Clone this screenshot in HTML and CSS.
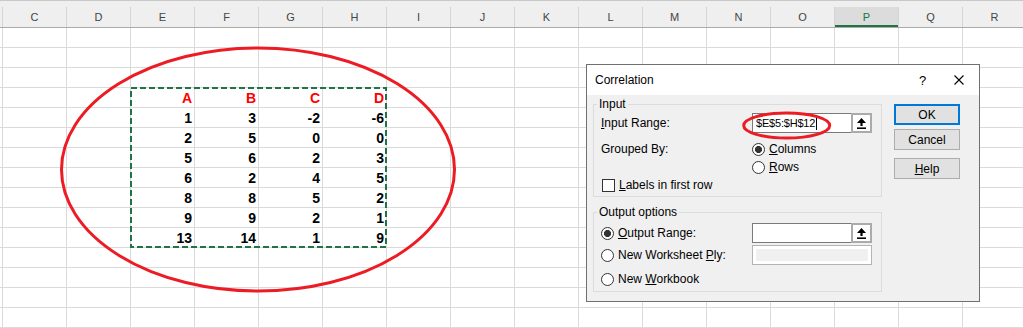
FILE: index.html
```html
<!DOCTYPE html>
<html lang="en">
<head>
  <meta charset="UTF-8">
  <title>Correlation</title>
  <link rel="stylesheet" href="styles.css">
</head>
<body>
  <!-- Column headers -->
  <div class="colheads">
    <div class="colhead stub"></div>
    <div class="colhead">C</div>
    <div class="colhead">D</div>
    <div class="colhead">E</div>
    <div class="colhead">F</div>
    <div class="colhead">G</div>
    <div class="colhead">H</div>
    <div class="colhead">I</div>
    <div class="colhead">J</div>
    <div class="colhead">K</div>
    <div class="colhead">L</div>
    <div class="colhead">M</div>
    <div class="colhead">N</div>
    <div class="colhead">O</div>
    <div class="colhead selected">P</div>
    <div class="colhead">Q</div>
    <div class="colhead">R</div>
  </div>

  <!-- Cells -->
  <div class="grid">
    <div class="range">
      <div class="cell hdr">A</div><div class="cell hdr">B</div><div class="cell hdr">C</div><div class="cell hdr">D</div>
      <div class="cell">1</div><div class="cell">3</div><div class="cell">-2</div><div class="cell">-6</div>
      <div class="cell">2</div><div class="cell">5</div><div class="cell">0</div><div class="cell">0</div>
      <div class="cell">5</div><div class="cell">6</div><div class="cell">2</div><div class="cell">3</div>
      <div class="cell">6</div><div class="cell">2</div><div class="cell">4</div><div class="cell">5</div>
      <div class="cell">8</div><div class="cell">8</div><div class="cell">5</div><div class="cell">2</div>
      <div class="cell">9</div><div class="cell">9</div><div class="cell">2</div><div class="cell">1</div>
      <div class="cell">13</div><div class="cell">14</div><div class="cell">1</div><div class="cell">9</div>
      <svg class="ants" viewBox="0 0 257 161">
        <rect x="1" y="1" width="255" height="159" fill="none" stroke="#217346" stroke-width="2" stroke-dasharray="6 3"/>
      </svg>
    </div>
  </div>

  <!-- Correlation dialog -->
  <div class="dialog">
    <div class="dlg-title">
      <span class="dlg-name">Correlation</span>
      <span class="dlg-help">?</span>
      <svg class="dlg-close" viewBox="0 0 10 10"><path d="M0.5 0.5L9.5 9.5M9.5 0.5L0.5 9.5" stroke="#000" stroke-width="1.1"/></svg>
    </div>
    <div class="dlg-body">
      <div class="dlg-main">
        <fieldset class="group group-input">
          <legend>Input</legend>
          <div class="row row-range">
            <span class="lbl"><u>I</u>nput Range:</span>
            <div class="refedit">
              <span class="ref-text">$E$5:$H$12<i class="caret"></i></span>
              <span class="ref-btn"><svg viewBox="0 0 9 11"><polygon points="4.5,0 9,5 5.6,5 5.6,8 3.4,8 3.4,5 0,5" fill="#000"/><rect x="0" y="9.4" width="9" height="1.6" fill="#000"/></svg></span>
            </div>
          </div>
          <div class="row row-opt row-grouped">
            <span class="lbl">Grouped By:</span>
            <span class="radio on"></span><span><u>C</u>olumns</span>
          </div>
          <div class="row row-opt">
            <span class="lbl"></span>
            <span class="radio"></span><span><u>R</u>ows</span>
          </div>
          <div class="row row-check">
            <span class="check"></span><span><u>L</u>abels in first row</span>
          </div>
        </fieldset>

        <fieldset class="group group-output">
          <legend>Output options</legend>
          <div class="row row-out">
            <span class="lbl lbl-radio"><span class="radio on"></span><span><u>O</u>utput Range:</span></span>
            <div class="refedit">
              <span class="ref-text"></span>
              <span class="ref-btn"><svg viewBox="0 0 9 11"><polygon points="4.5,0 9,5 5.6,5 5.6,8 3.4,8 3.4,5 0,5" fill="#000"/><rect x="0" y="9.4" width="9" height="1.6" fill="#000"/></svg></span>
            </div>
          </div>
          <div class="row row-out row-ply">
            <span class="lbl lbl-radio"><span class="radio"></span><span>New Worksheet <u>P</u>ly:</span></span>
            <div class="ref-off"></div>
          </div>
          <div class="row row-out row-book">
            <span class="lbl lbl-radio"><span class="radio"></span><span>New <u>W</u>orkbook</span></span>
          </div>
        </fieldset>
      </div>

      <div class="dlg-buttons">
        <button class="btn btn-default">OK</button>
        <button class="btn btn-cancel">Cancel</button>
        <button class="btn btn-help"><u>H</u>elp</button>
      </div>
    </div>
  </div>

  <!-- Hand-drawn red marks -->
  <svg class="marks" viewBox="0 0 1023 328">
    <ellipse cx="258" cy="169.5" rx="196.5" ry="121.5" fill="none" stroke="#ed1c24" stroke-width="3"/>
    <ellipse cx="786.7" cy="125.5" rx="43" ry="12.5" fill="none" stroke="#ed1c24" stroke-width="3"/>
  </svg>
</body>
</html>
```

FILE: styles.css
```css
/* Base */
* { margin: 0; padding: 0; box-sizing: border-box; }
body {
  width: 1023px; height: 328px; overflow: hidden; position: relative;
  background: #fff; font-family: "Liberation Sans", Arial, sans-serif; color: #000;
}

/* Column headers */
.colheads {
  display: flex; height: 28px; padding-top: 6px;
  background: #efefef; border-top: 1px solid #c8c8c8; border-bottom: 1px solid #ababab;
}
.colhead {
  flex: none; width: 64px; height: 20px; line-height: 20px;
  border-right: 1px solid #d4d4d4; text-align: center; font-size: 11px; color: #444;
}
.colhead.stub { width: 3px; }
.colhead.selected { background: #dcdcdc; color: #217346; box-shadow: inset 0 -2px 0 #217346; }

/* Cell grid */
.grid {
  display: grid; grid-template-columns: 3px repeat(16, 64px); grid-template-rows: repeat(15, 20px);
  background-image:
    linear-gradient(to right, transparent 63px, #dadada 63px),
    linear-gradient(to bottom, transparent 19px, #dadada 19px);
  background-size: 64px 100%, 100% 20px;
  background-position: 3px 0, 0 0;
}
.range {
  grid-column: 4 / span 4; grid-row: 4 / span 8; position: relative;
  display: grid; grid-template-columns: repeat(4, 64px); grid-auto-rows: 20px;
}
.cell {
  font-size: 14px; font-weight: bold; line-height: 21px;
  text-align: right; padding-right: 3px;
}
.cell.hdr { color: #f00; }
.ants { position: absolute; left: -1px; top: -1px; width: 257px; height: 161px; }

/* Dialog */
.dialog {
  position: absolute; left: 586px; top: 64px; width: 394px; height: 238px;
  border: 1px solid #707070; background: #f0f0f0; font-size: 12px;
}
.dlg-title { display: flex; align-items: center; height: 30px; background: #fff; padding-left: 8px; }
.dlg-name { flex: 1; }
.dlg-help { width: 7px; text-align: center; font-size: 13px; margin-right: 28px; }
.dlg-close { width: 10px; height: 10px; margin-right: 15px; }

.dlg-body { display: flex; padding-left: 6px; }
.dlg-main { width: 289px; }

.group { border: 1px solid #dcdcdc; padding: 0 0 0 7px; min-width: 0; }
.group legend { margin-left: -4px; padding: 0 2px; line-height: 14px; }
.group-input { margin-top: 2px; padding-top: 2px; padding-bottom: 2px; }
.group-output { margin-top: 8px; padding-top: 4px; padding-bottom: 2px; }

.row { display: flex; align-items: center; }
.lbl { flex: none; width: 151px; }
.lbl-radio { display: flex; align-items: center; gap: 4px; }
.row-range { height: 20px; }
.row-opt { height: 18px; gap: 4px; }
.row-opt .lbl { margin-right: -4px; }
.row-grouped { margin-top: 7px; }
.row-check { height: 18px; gap: 4px; }
.row-out { height: 20px; }
.row-ply { margin-top: 2px; }
.row-book { margin-top: 4px; }

.radio {
  flex: none; width: 13px; height: 13px; border: 1px solid #333; border-radius: 50%; background: #fff;
}
.radio.on { background: radial-gradient(circle, #333 0 3.3px, #fff 3.8px); }
.check { flex: none; width: 13px; height: 13px; border: 1px solid #333; background: #fff; margin-left: 1px; }

/* Range pickers */
.refedit { display: flex; width: 120px; height: 20px; }
.ref-text {
  flex: 1; display: flex; align-items: center; padding-left: 3px;
  font-size: 11px; letter-spacing: -0.2px;
  background: #fff; border: 1px solid #7a7a7a; border-right: 0;
}
.caret { display: inline-block; width: 1px; height: 13px; background: #000; margin-left: 1px; }
.ref-btn {
  flex: none; width: 21px; display: flex; align-items: center; justify-content: center;
  background: #fff; border: 2px solid #ababab;
}
.ref-btn svg { width: 9px; height: 11px; }
.ref-off {
  width: 120px; height: 20px; border: 1px solid #b4b4b4;
  background: #f0f0f0; box-shadow: inset 0 0 0 3px #fff;
}

/* Buttons */
.dlg-buttons { display: flex; flex-direction: column; margin-left: 12px; padding-top: 9px; }
.btn {
  width: 66px; height: 21px; font: inherit; color: #000;
  background: #e1e1e1; border: 1px solid #adadad;
}
.btn-default { border: 2px solid #0078d7; }
.btn-cancel { margin-top: 4px; }
.btn-help { margin-top: 8px; }

/* Red annotation marks */
.marks { position: absolute; left: 0; top: 0; width: 1023px; height: 328px; pointer-events: none; }
```
